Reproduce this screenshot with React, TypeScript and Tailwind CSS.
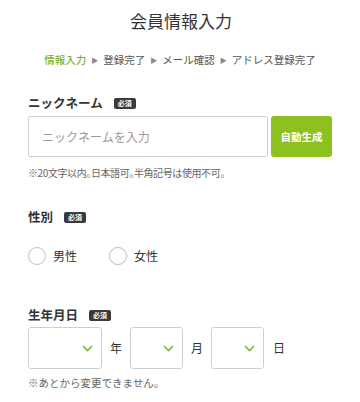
import React from "react";

const Badge = () => (
  <span className="ml-[11px] inline-flex h-[11px] w-[22px] items-center justify-center rounded-[2px] bg-[#3a3a3a] text-[7px] font-bold leading-none text-white">
    必須
  </span>
);

const Chevron = () => (
  <svg width="11" height="7" viewBox="0 0 11 7" fill="none">
    <polyline points="1,1 5.5,5.5 10,1" stroke="#7fb82a" strokeWidth="1.6" fill="none" />
  </svg>
);

const Select = ({ w }: { w: string }) => (
  <div className={`${w} flex h-[42px] items-center justify-end rounded-[3px] border border-[#cfcfcf] bg-white pr-[8px]`}>
    <Chevron />
  </div>
);

const Radio = ({ label }: { label: string }) => (
  <div className="flex items-center gap-[7px]">
    <span className="h-[18px] w-[18px] rounded-full border border-[#bdbdbd] bg-white" />
    <span className="text-[12px] leading-none text-[#333]">{label}</span>
  </div>
);

export default function App() {
  return (
    <div
      className="h-[402px] w-[360px] overflow-hidden bg-white text-[#333]"
      style={{ fontFamily: '"Noto Sans CJK JP", "Noto Sans", sans-serif' }}
    >
      <div className="flex h-[40px] items-center justify-center pl-[2px] text-[17px] leading-none text-[#333]">
        会員情報入力
      </div>
      <div className="flex h-[40px] items-center justify-center text-[10.5px] leading-none text-[#555]">
        <span className="font-medium text-[#79b52a]">情報入力</span>
        <span className="mx-[5px] text-[7px] text-[#888]">▶</span>
        <span>登録完了</span>
        <span className="mx-[5px] text-[7px] text-[#888]">▶</span>
        <span>メール確認</span>
        <span className="mx-[5px] text-[7px] text-[#888]">▶</span>
        <span>アドレス登録完了</span>
      </div>

      <div className="px-[28px]">
        <div className="mt-[13px] flex h-[20px] items-center text-[12.5px] font-bold leading-none">
          ニックネーム
          <Badge />
        </div>
        <div className="mt-[3px] flex h-[41px] gap-[3px]">
          <div className="flex w-[240px] items-center rounded-[2px] border border-[#cfcfcf] bg-white pl-[13px] text-[12px] text-[#9a9a9a]">
            ニックネームを入力
          </div>
          <div className="flex w-[61px] items-center justify-center rounded-[3px] bg-[#8cc11f] text-[10.5px] font-bold text-white">
            自動生成
          </div>
        </div>
        <div className="mt-[8px] flex h-[16px] items-center text-[10px] leading-none tracking-[-0.4px] text-[#666] [font-feature-settings:'palt']">
          ※20文字以内。日本語可。半角記号は使用不可。
        </div>

        <div className="mt-[26px] flex h-[20px] items-center text-[12.5px] font-bold leading-none">
          性別
          <Badge />
        </div>
        <div className="mt-[20px] flex h-[18px] items-center gap-[32px]">
          <Radio label="男性" />
          <Radio label="女性" />
        </div>

        <div className="mt-[40px] flex h-[20px] items-center text-[12.5px] font-bold leading-none">
          生年月日
          <Badge />
        </div>
        <div className="mt-[2px] flex items-center">
          <Select w="w-[74px]" />
          <span className="mx-[8px] text-[12px] leading-none">年</span>
          <Select w="w-[53px]" />
          <span className="mx-[8px] text-[12px] leading-none">月</span>
          <Select w="w-[53px]" />
          <span className="mx-[9px] text-[12px] leading-none">日</span>
        </div>
        <div className="mt-[6px] flex h-[16px] items-center text-[10.5px] leading-none text-[#666]">
          ※あとから変更できません。
        </div>
      </div>
    </div>
  );
}
